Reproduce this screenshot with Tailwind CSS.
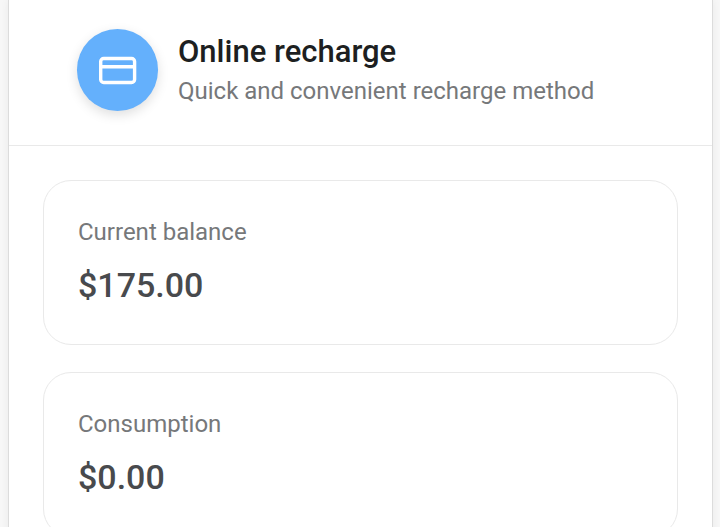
<!DOCTYPE html>
<html lang="en">
<head>
<meta charset="utf-8">
<meta name="viewport" content="width=device-width, initial-scale=1">
<title>Online recharge</title>
<script src="https://cdn.jsdelivr.net/npm/@tailwindcss/browser@4"></script>
</head>
<body class="bg-[#f7f7f7] pr-[7px] pl-2 font-[Roboto,sans-serif]">
<main class="min-h-screen border-x border-[#dcdcdc] bg-white shadow-[0_0_8px_rgba(0,0,0,0.06)]">
  <header class="flex items-center gap-5 border-b border-[#e9e9e9] px-17 pt-[29px] pb-[34px]">
    <div class="flex h-[82px] w-[81px] shrink-0 items-center justify-center rounded-full bg-[#64b0fc] shadow-[0_4px_12px_rgba(0,0,0,0.13)]">
      <svg class="size-11" viewBox="0 0 44 44" fill="none" stroke="#fff" stroke-width="3.4" aria-hidden="true">
        <rect x="4.7" y="10.5" width="33.9" height="24" rx="3"/>
        <path d="M4.7 18.8H38.6"/>
      </svg>
    </div>
    <div class="pt-[2px]">
      <h1 class="text-[31px] leading-10 font-medium text-[#1d1f21]">Online recharge</h1>
      <p class="text-[24px] leading-[38px] text-[#76787a]">Quick and convenient recharge method</p>
    </div>
  </header>
  <div class="flex flex-col gap-[27px] px-[34px] py-[34px]">
    <section class="rounded-[28px] border border-[#e9e9e9] px-[34px] py-[34px]">
      <h2 class="text-[24px] leading-[34px] text-[#76787a]">Current balance</h2>
      <p class="mt-3 text-[34px] leading-[49px] font-medium text-[#484a4d]">$175.00</p>
    </section>
    <section class="rounded-[28px] border border-[#e9e9e9] px-[34px] py-[34px]">
      <h2 class="text-[24px] leading-[34px] text-[#76787a]">Consumption</h2>
      <p class="mt-3 text-[34px] leading-[49px] font-medium text-[#484a4d]">$0.00</p>
    </section>
  </div>
</main>
</body>
</html>
